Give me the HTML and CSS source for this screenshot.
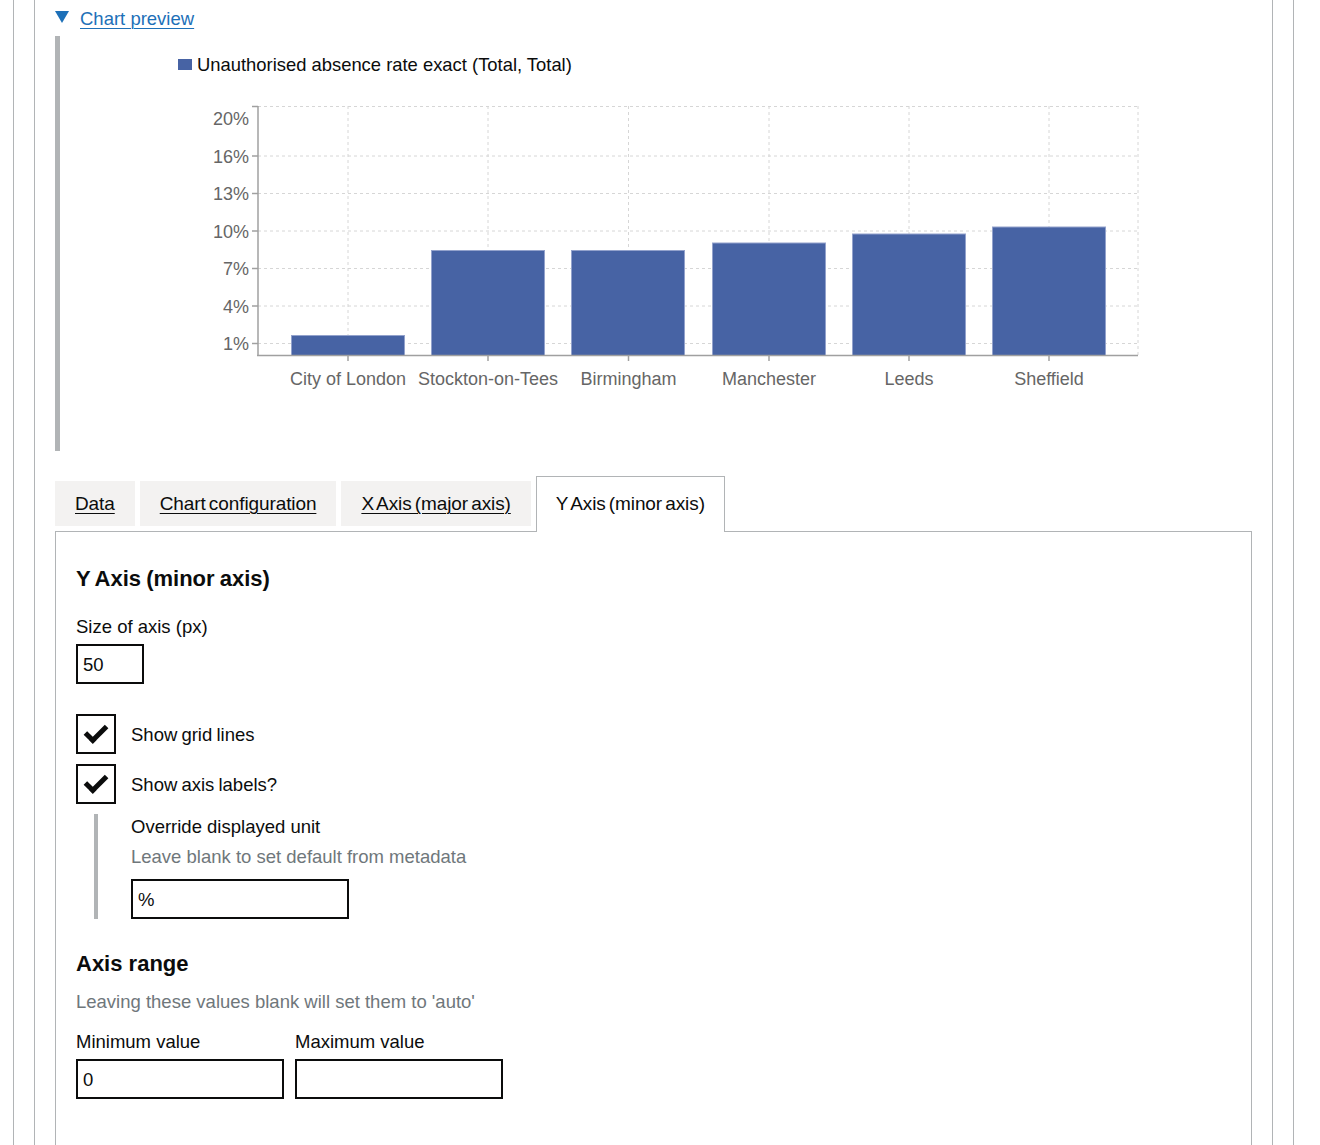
FILE: index.html
```html
<!DOCTYPE html>
<html lang="en">
<head>
<meta charset="utf-8">
<title>Chart builder - Y Axis</title>
<link rel="stylesheet" href="styles.css">
</head>
<body>
<div class="outer">
  <div class="inner">
    <details class="details" open>
      <summary class="summary"><span class="summary-text">Chart preview</span></summary>
      <div class="details-text">
        <svg class="chart" width="1192" height="415" viewBox="60 36 1192 415" xmlns="http://www.w3.org/2000/svg">
          <rect class="legend-swatch" x="178" y="59" width="14" height="11"/>
          <text class="legend-text" x="197" y="64">Unauthorised absence rate exact (Total, Total)</text>

          <g class="grid">
            <line x1="258" x2="1138" y1="106.5" y2="106.5"/>
            <line x1="258" x2="1138" y1="156" y2="156"/>
            <line x1="258" x2="1138" y1="193.5" y2="193.5"/>
            <line x1="258" x2="1138" y1="231" y2="231"/>
            <line x1="258" x2="1138" y1="268.5" y2="268.5"/>
            <line x1="258" x2="1138" y1="306" y2="306"/>
            <line x1="258" x2="1138" y1="343.5" y2="343.5"/>
            <line x1="348" x2="348" y1="106" y2="355"/>
            <line x1="488" x2="488" y1="106" y2="355"/>
            <line x1="628.5" x2="628.5" y1="106" y2="355"/>
            <line x1="769" x2="769" y1="106" y2="355"/>
            <line x1="909" x2="909" y1="106" y2="355"/>
            <line x1="1049" x2="1049" y1="106" y2="355"/>
            <line x1="1138" x2="1138" y1="106" y2="355"/>
          </g>

          <g class="bars">
            <rect x="291.5" y="335.5" width="113" height="20"/>
            <rect x="431.5" y="250.5" width="113" height="105"/>
            <rect x="571.5" y="250.5" width="113" height="105"/>
            <rect x="712.5" y="243" width="113" height="112.5"/>
            <rect x="852.5" y="234" width="113" height="121.5"/>
            <rect x="992.5" y="227" width="113" height="128.5"/>
          </g>

          <g class="axis">
            <line x1="258" x2="258" y1="106" y2="356"/>
            <line x1="257" x2="1138" y1="355.5" y2="355.5"/>
            <line x1="252" x2="258" y1="106.5" y2="106.5"/>
            <line x1="252" x2="258" y1="156" y2="156"/>
            <line x1="252" x2="258" y1="193.5" y2="193.5"/>
            <line x1="252" x2="258" y1="231" y2="231"/>
            <line x1="252" x2="258" y1="268.5" y2="268.5"/>
            <line x1="252" x2="258" y1="306" y2="306"/>
            <line x1="252" x2="258" y1="343.5" y2="343.5"/>
            <line x1="348" x2="348" y1="355" y2="361"/>
            <line x1="488" x2="488" y1="355" y2="361"/>
            <line x1="628.5" x2="628.5" y1="355" y2="361"/>
            <line x1="769" x2="769" y1="355" y2="361"/>
            <line x1="909" x2="909" y1="355" y2="361"/>
            <line x1="1049" x2="1049" y1="355" y2="361"/>
          </g>

          <g class="y-labels">
            <text x="249" y="119">20%</text>
            <text x="249" y="157">16%</text>
            <text x="249" y="194">13%</text>
            <text x="249" y="232">10%</text>
            <text x="249" y="269">7%</text>
            <text x="249" y="307">4%</text>
            <text x="249" y="344">1%</text>
          </g>

          <g class="x-labels">
            <text x="348" y="379">City of London</text>
            <text x="488" y="379">Stockton-on-Tees</text>
            <text x="628.5" y="379">Birmingham</text>
            <text x="769" y="379">Manchester</text>
            <text x="909" y="379">Leeds</text>
            <text x="1049" y="379">Sheffield</text>
          </g>
        </svg>
      </div>
    </details>

    <div class="tabs">
      <ul class="tab-list">
        <li class="tab"><a class="tab-link" href="#data">Data</a></li>
        <li class="tab"><a class="tab-link" href="#config">Chart configuration</a></li>
        <li class="tab"><a class="tab-link" href="#xaxis">X Axis (major axis)</a></li>
        <li class="tab tab--selected"><a class="tab-link tab-link--selected" href="#yaxis">Y Axis (minor axis)</a></li>
      </ul>

      <div class="tab-panel" id="yaxis">
        <h2 class="heading">Y Axis (minor axis)</h2>

        <div class="form-group">
          <label class="label" for="size">Size of axis (px)</label>
          <div class="input input--size" id="size">50</div>
        </div>

        <div class="checkboxes">
          <div class="checkbox-item">
            <span class="check-box"></span>
            <span class="checkbox-label">Show grid lines</span>
          </div>
          <div class="checkbox-item">
            <span class="check-box"></span>
            <span class="checkbox-label">Show axis labels?</span>
          </div>
          <div class="conditional">
            <div class="label label--tight">Override displayed unit</div>
            <div class="hint hint--tight">Leave blank to set default from metadata</div>
            <div class="input input--unit">%</div>
          </div>
        </div>

        <fieldset class="fieldset">
          <legend class="legend">Axis range</legend>
          <div class="hint hint--range">Leaving these values blank will set them to 'auto'</div>
          <div class="range-row">
            <div class="range-col">
              <div class="label">Minimum value</div>
              <div class="input input--range">0</div>
            </div>
            <div class="range-col">
              <div class="label">Maximum value</div>
              <div class="input input--range"></div>
            </div>
          </div>
        </fieldset>
      </div>
    </div>
  </div>
</div>
</body>
</html>
```

FILE: styles.css
```css
* {
  box-sizing: border-box;
}

html, body {
  margin: 0;
  padding: 0;
  background: #ffffff;
}

body {
  font-family: "Liberation Sans", Arial, sans-serif;
  color: #0b0c0c;
  font-size: 18.5px;
  line-height: 25px;
}

.outer {
  margin-left: 13px;
  width: 1281px;
  border-left: 1px solid #b1b4b6;
  border-right: 1px solid #b1b4b6;
  padding: 0 20px;
}

.inner {
  border-left: 1px solid #b1b4b6;
  border-right: 1px solid #b1b4b6;
  padding: 6px 20px 0 20px;
}

/* details */
.details {
  margin: 0 0 25px 0;
}

.summary {
  display: inline-block;
  position: relative;
  padding-left: 25px;
  cursor: pointer;
  list-style: none;
  color: #1d70b8;
  font-size: 18.5px;
  line-height: 25px;
}

.summary::-webkit-details-marker {
  display: none;
}

.summary::before {
  content: "";
  position: absolute;
  left: 0;
  top: 5px;
  width: 0;
  height: 0;
  border-style: solid;
  border-width: 12px 7px 0 7px;
  border-color: #1d70b8 transparent transparent transparent;
}

.summary-text {
  text-decoration: underline;
  text-underline-offset: 3px;
  text-decoration-thickness: 1px;
}

.details-text {
  margin-top: 5px;
  border-left: 5px solid #b1b4b6;
  height: 415px;
}

.chart {
  display: block;
}

.chart text {
  font-family: "Liberation Sans", Arial, sans-serif;
}

.legend-swatch {
  fill: #4763a4;
}

.legend-text {
  font-size: 18.4px;
  fill: #0b0c0c;
  dominant-baseline: central;
}

.grid line {
  stroke: #d6d6d6;
  stroke-width: 1;
  stroke-dasharray: 3 3;
}

.bars rect {
  fill: #4763a4;
  stroke: #93a2cc;
  stroke-width: 1;
}

.axis line {
  stroke: #a0a0a0;
  stroke-width: 1.5;
}

.y-labels text {
  font-size: 18px;
  fill: #666666;
  text-anchor: end;
  dominant-baseline: central;
}

.x-labels text {
  font-size: 18px;
  fill: #666666;
  text-anchor: middle;
  dominant-baseline: central;
}

/* tabs */
.tab-list {
  display: flex;
  align-items: flex-start;
  margin: 0;
  padding: 0;
  list-style: none;
  border-bottom: 1px solid #b1b4b6;
}

.tab {
  margin: 5px 5px 0 0;
  padding: 10px 20px;
  background: #f3f2f1;
  font-size: 19px;
  line-height: 25px;
  word-spacing: -2px;
  letter-spacing: -0.1px;
}

.tab--selected {
  position: relative;
  margin-top: 0;
  margin-bottom: -1px;
  padding: 14px 19px 16px 19px;
  border: 1px solid #b1b4b6;
  border-bottom: 0;
  background: #ffffff;
}

.tab-link {
  color: #0b0c0c;
  text-decoration: underline;
  text-underline-offset: 3px;
  text-decoration-thickness: 1px;
}

.tab-link--selected {
  text-decoration: none;
}

.tab-panel {
  border: 1px solid #b1b4b6;
  border-top: 0;
  padding: 32px 20px 60px 20px;
}

.heading {
  margin: 0 0 20px 0;
  font-size: 22px;
  line-height: 30px;
  font-weight: 700;
  word-spacing: -1px;
}

.label {
  display: block;
  margin-bottom: 5px;
  font-size: 18.5px;
  line-height: 25px;
}

.hint {
  color: #6f777b;
  font-size: 18.5px;
  line-height: 25px;
}

.hint--tight {
  margin-bottom: 10px;
}

.hint--range {
  margin-bottom: 15px;
}

.input {
  height: 40px;
  border: 2px solid #0b0c0c;
  padding: 6px 5px 4px 5px;
  font-size: 18.5px;
  line-height: 26px;
  background: #ffffff;
}

.input--size {
  width: 68px;
}

.input--unit {
  width: 218px;
}

.input--range {
  width: 208px;
}

.form-group {
  margin-bottom: 30px;
}

/* checkboxes */
.checkboxes {
  margin-bottom: 30px;
}

.checkbox-item {
  display: flex;
  align-items: center;
  margin-bottom: 10px;
}

.check-box {
  position: relative;
  flex: 0 0 40px;
  width: 40px;
  height: 40px;
  border: 2px solid #0b0c0c;
  background: #ffffff;
}

.check-box::after {
  content: "";
  position: absolute;
  top: 9px;
  left: 7px;
  width: 17px;
  height: 8px;
  border-style: solid;
  border-color: #0b0c0c;
  border-width: 0 0 5px 5px;
  transform: rotate(-45deg);
}

.checkbox-label {
  padding-left: 15px;
  font-size: 18.5px;
  line-height: 25px;
  word-spacing: -1px;
}

.conditional {
  margin-left: 18px;
  padding-left: 33px;
  border-left: 4px solid #b1b4b6;
}

.label--tight {
  margin-bottom: 5px;
}

/* fieldset */
.fieldset {
  margin: 0;
  padding: 0;
  border: 0;
  min-width: 0;
}

.legend {
  padding: 0;
  margin-bottom: 10px;
  font-size: 22px;
  line-height: 30px;
  font-weight: 700;
}

.range-row {
  display: flex;
  gap: 11px;
}

.range-col {
  display: flex;
  flex-direction: column;
}
```
